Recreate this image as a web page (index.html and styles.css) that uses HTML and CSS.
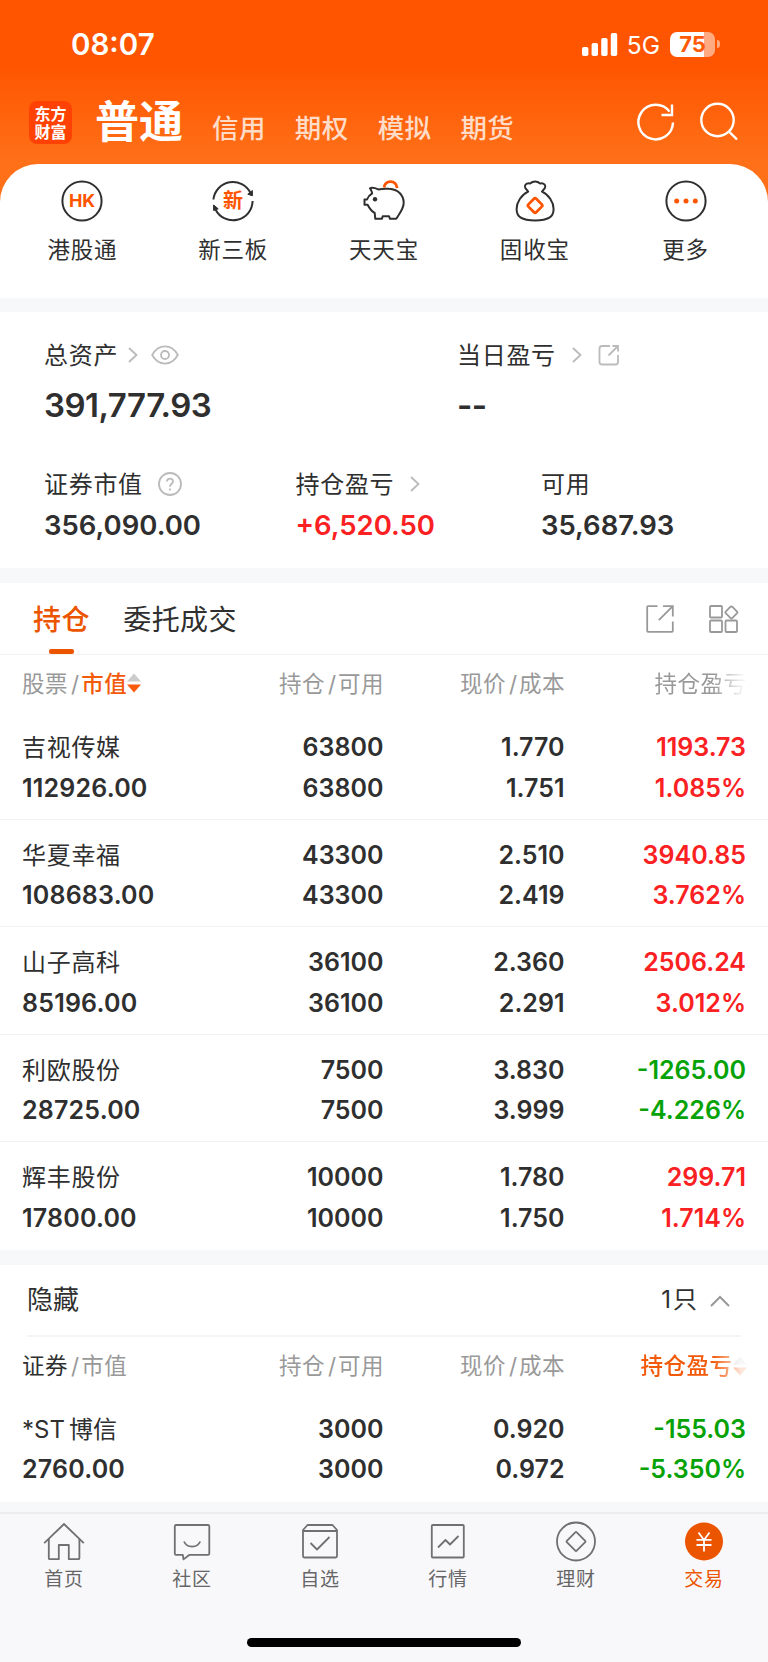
FILE: index.html
```html
<!DOCTYPE html>
<html lang="zh-CN">
<head>
  <meta charset="UTF-8" />
  <meta name="viewport" content="width=device-width, initial-scale=1" />
  <title>东方财富 - 交易</title>
  <link rel="stylesheet" href="styles.css">
</head>
<body>
  <header class="header">
    <div class="status-bar">
      <span class="time">08:07</span>
      <div class="status-right">
        <svg class="signal" width="36" height="23" viewBox="0 0 36 23" fill="#fff">
          <rect x="0" y="14" width="6.4" height="9" rx="1.8"/>
          <rect x="9.6" y="10" width="6.4" height="13" rx="1.8"/>
          <rect x="19.2" y="5" width="6.4" height="18" rx="1.8"/>
          <rect x="28.8" y="0" width="6.4" height="23" rx="1.8"/>
        </svg>
        <span class="network">5G</span>
        <span class="battery">75</span>
        <span class="battery-cap"></span>
      </div>
    </div>

    <div class="nav-bar">
      <div class="logo"><span>东方</span><span>财富</span></div>
      <nav class="accounts">
        <span class="account active">普通</span>
        <span class="account">信用</span>
        <span class="account">期权</span>
        <span class="account">模拟</span>
        <span class="account">期货</span>
      </nav>
      <div class="nav-actions">
        <svg width="40" height="40" viewBox="0 0 40 40" fill="none" stroke="#fff" stroke-width="2.4">
          <path d="M37 20.5A17.3 17.3 0 1 1 33.5 9.6"/>
          <path d="M36 2.5V13H25.5"/>
        </svg>
        <svg width="40" height="40" viewBox="0 0 40 40" fill="none" stroke="#fff" stroke-width="2.4">
          <circle cx="18.5" cy="18" r="16.2"/>
          <path d="M29.8 29.3L38 37.5"/>
        </svg>
      </div>
    </div>
  </header>

  <section class="services">
    <div class="service">
      <svg width="48" height="48" viewBox="0 0 48 48" fill="none" stroke="#2f2f2f" stroke-width="2">
        <circle cx="24" cy="24" r="19.6"/>
        <text class="icon-hk" x="24" y="30.4" text-anchor="middle">HK</text>
      </svg>
      <span>港股通</span>
    </div>
    <div class="service">
      <svg width="48" height="48" viewBox="0 0 48 48" fill="none" stroke="#2f2f2f" stroke-width="2">
        <path d="M4.4 22.5A19.6 19.6 0 0 1 41.5 16"/>
        <path d="M43.6 24A19.6 19.6 0 0 1 6.5 32.5"/>
        <path d="M43.4 13.5V18.8L38.8 17.2Z" fill="#2f2f2f" stroke-width="1"/>
        <path d="M4.6 33.5V28L9.2 31.8Z" fill="#2f2f2f" stroke-width="1"/>
        <text class="icon-xin" x="24" y="31" text-anchor="middle">新</text>
      </svg>
      <span>新三板</span>
    </div>
    <div class="service">
      <svg width="48" height="48" viewBox="0 0 48 48" fill="none" stroke="#2f2f2f" stroke-width="2" stroke-linejoin="round">
        <path d="M24 10.4C25.6 2.8 35.6 2.6 37.2 11" stroke="#ff5500" stroke-width="2.8"/>
        <path d="M10 11.4C12.5 10 15.5 11.2 18.3 12.4C22 11.6 25 11.4 29 11.8C38 12.3 43.6 18 43.7 25.8C43.7 32 39.5 36.5 36.2 41.8H30L29 39.2H22.7L22 41.8H15.3L14.7 36C11.5 34.3 9.5 31.5 7.6 27.8H4.5V22.5H7C8 19.8 9.5 18 12.2 16.4C11.8 14.5 11.3 13 10 11.4Z"/>
        <circle cx="15" cy="22.2" r="2.2" fill="#2f2f2f" stroke="none"/>
      </svg>
      <span>天天宝</span>
    </div>
    <div class="service">
      <svg width="48" height="48" viewBox="0 0 48 48" fill="none" stroke="#2f2f2f" stroke-width="2" stroke-linejoin="round">
        <path d="M17.2 14.6L14.4 11.2C12.8 8.5 15 6 18.6 6.4C20 6.5 20.2 5.6 21.6 5C23.3 4.3 25 4.3 26.6 5C28 5.6 28.2 6.5 29.6 6.4C33.2 6 35.4 8.5 33.8 11.2L31 14.6C37.5 17.5 42.6 25 42.6 32C42.6 40 37.5 43.4 24.1 43.4C10.7 43.4 5.6 40 5.6 32C5.6 25 10.7 17.5 17.2 14.6Z"/>
        <rect x="18.6" y="23" width="11" height="11" rx="1.6" transform="rotate(45 24.1 28.5)" stroke="#ff5500" stroke-width="2.8"/>
      </svg>
      <span>固收宝</span>
    </div>
    <div class="service">
      <svg width="48" height="48" viewBox="0 0 48 48" fill="none" stroke="#2f2f2f" stroke-width="2">
        <circle cx="24" cy="24" r="19.6"/>
        <g fill="#ff5500" stroke="none">
          <circle cx="14.7" cy="24" r="2.5"/>
          <circle cx="24" cy="24" r="2.5"/>
          <circle cx="33.3" cy="24" r="2.5"/>
        </g>
      </svg>
      <span>更多</span>
    </div>
  </section>

  <section class="assets">
    <div class="asset-row total">
      <div class="asset">
        <div class="asset-label">总资产
          <svg class="arrow" width="10" height="16" viewBox="0 0 10 16"><path d="M1 1L8.5 8L1 15"/></svg>
          <svg class="eye" width="28" height="20" viewBox="0 0 28 20"><path d="M1.2 10C7.5-1.4 20.5-1.4 26.8 10C20.5 21.4 7.5 21.4 1.2 10Z"/><circle cx="14" cy="10" r="4"/></svg>
        </div>
        <div class="asset-value large">391,777.93</div>
      </div>
      <div class="asset">
        <div class="asset-label">当日盈亏
          <svg class="arrow" width="10" height="16" viewBox="0 0 10 16"><path d="M1 1L8.5 8L1 15"/></svg>
          <svg class="share" width="22" height="22" viewBox="0 0 22 22"><path d="M12 2H4Q1.5 2 1.5 4.5V18Q1.5 20.5 4 20.5H17.5Q20 20.5 20 18V11M14.5 2H20V7.5M20 2L10.5 11.5"/></svg>
        </div>
        <div class="asset-value large">--</div>
      </div>
    </div>
    <div class="asset-row detail">
      <div class="asset">
        <div class="asset-label">证券市值
          <svg class="help" width="24" height="24" viewBox="0 0 24 24"><circle cx="12" cy="12" r="11"/><path d="M9 9.5C9 5.6 15 5.6 15 9.5C15 11.8 12 11.8 12 14.8"/><path d="M12 16.5V18.5"/></svg>
        </div>
        <div class="asset-value">356,090.00</div>
      </div>
      <div class="asset">
        <div class="asset-label">持仓盈亏
          <svg class="arrow" width="10" height="16" viewBox="0 0 10 16"><path d="M1 1L8.5 8L1 15"/></svg>
        </div>
        <div class="asset-value up">+6,520.50</div>
      </div>
      <div class="asset">
        <div class="asset-label">可用</div>
        <div class="asset-value">35,687.93</div>
      </div>
    </div>
  </section>

  <section class="positions">
    <div class="tabs">
      <span class="tab active">持仓</span>
      <span class="tab">委托成交</span>
      <div class="tab-actions">
        <svg width="28" height="28" viewBox="0 0 28 28"><path d="M11.5 1.2H2Q1.2 1.2 1.2 2V26Q1.2 26.8 2 26.8H26Q26.8 26.8 26.8 26V16.5M17 1.2H26.8V11.5M26.8 1.2L12.8 15.2"/></svg>
        <svg width="30" height="28" viewBox="0 0 30 28"><rect x="1" y="1" width="12" height="11.5" rx="1"/><rect x="1" y="15.5" width="12" height="11.5" rx="1"/><rect x="16.5" y="15.5" width="11.5" height="11.5" rx="1"/><rect x="17.8" y="2.8" width="9.2" height="9.2" rx="1.5" transform="rotate(45 22.4 7.4)"/></svg>
      </div>
    </div>

    <div class="row table-head">
      <span>股票<i>/</i><b>市值</b><svg class="sort" width="14" height="20" viewBox="0 0 14 20"><path d="M0 8.5L7 0.5L14 8.5Z" fill="#ccc"/><path d="M0 11.5L7 19.5L14 11.5Z" fill="#fb5a0c"/></svg></span>
      <span>持仓<i>/</i>可用</span>
      <span>现价<i>/</i>成本</span>
      <span class="faded">持仓盈亏</span>
    </div>

    <div class="row stock">
      <div><span class="name">吉视传媒</span><span>112926.00</span></div>
      <div><span>63800</span><span>63800</span></div>
      <div><span>1.770</span><span>1.751</span></div>
      <div class="up"><span>1193.73</span><span>1.085%</span></div>
    </div>
    <div class="row stock">
      <div><span class="name">华夏幸福</span><span>108683.00</span></div>
      <div><span>43300</span><span>43300</span></div>
      <div><span>2.510</span><span>2.419</span></div>
      <div class="up"><span>3940.85</span><span>3.762%</span></div>
    </div>
    <div class="row stock">
      <div><span class="name">山子高科</span><span>85196.00</span></div>
      <div><span>36100</span><span>36100</span></div>
      <div><span>2.360</span><span>2.291</span></div>
      <div class="up"><span>2506.24</span><span>3.012%</span></div>
    </div>
    <div class="row stock">
      <div><span class="name">利欧股份</span><span>28725.00</span></div>
      <div><span>7500</span><span>7500</span></div>
      <div><span>3.830</span><span>3.999</span></div>
      <div class="down"><span>-1265.00</span><span>-4.226%</span></div>
    </div>
    <div class="row stock">
      <div><span class="name">辉丰股份</span><span>17800.00</span></div>
      <div><span>10000</span><span>10000</span></div>
      <div><span>1.780</span><span>1.750</span></div>
      <div class="up"><span>299.71</span><span>1.714%</span></div>
    </div>
  </section>

  <section class="hidden-stocks">
    <div class="hidden-title">
      <span>隐藏</span>
      <span class="count">1只</span>
      <svg width="20" height="12" viewBox="0 0 20 12"><path d="M1 11L10 2L19 11"/></svg>
    </div>
    <div class="row table-head">
      <span><em>证券</em><i>/</i>市值</span>
      <span>持仓<i>/</i>可用</span>
      <span>现价<i>/</i>成本</span>
      <span class="faded"><b>持仓盈亏</b><svg class="sort" width="14" height="20" viewBox="0 0 14 20"><path d="M0 8.5L7 0.5L14 8.5Z" fill="#ccc"/><path d="M0 11.5L7 19.5L14 11.5Z" fill="#fb5a0c"/></svg></span>
    </div>
    <div class="row stock">
      <div><span class="name">*ST<span class="thin-gap"></span>博信</span><span>2760.00</span></div>
      <div><span>3000</span><span>3000</span></div>
      <div><span>0.920</span><span>0.972</span></div>
      <div class="down"><span>-155.03</span><span>-5.350%</span></div>
    </div>
  </section>

  <footer class="tab-bar">
    <div class="tab-items">
      <div class="tab-item">
        <svg width="42" height="42" viewBox="0 0 42 42"><path d="M1.2 22.2L21 3L40.8 22.2"/><path d="M5.8 18V37.2Q5.8 38.2 6.8 38.2H15.8V24H25.8V38.2H35.4Q36.4 38.2 36.4 37.2V18"/></svg>
        <span>首页</span>
      </div>
      <div class="tab-item">
        <svg width="42" height="42" viewBox="0 0 42 42"><path d="M5 4H37Q38.3 4 38.3 5.3V32.5Q38.3 33.8 37 33.8H18.5L12.5 38.4L11.8 33.8H5Q3.8 33.8 3.8 32.5V5.3Q3.8 4 5 4Z"/><path d="M13 20.5C16 27.3 26.2 27.3 29.2 20.5"/></svg>
        <span>社区</span>
      </div>
      <div class="tab-item">
        <svg width="42" height="42" viewBox="0 0 42 42"><path d="M4 9L8.5 4H33.5L38 9V35Q38 36.5 36.5 36.5H5.5Q4 36.5 4 35V9Z"/><path d="M4 10H38M11.5 22L18 28.5L30.5 16"/></svg>
        <span>自选</span>
      </div>
      <div class="tab-item">
        <svg width="42" height="42" viewBox="0 0 42 42"><rect x="4.8" y="4" width="32" height="32.5" rx="1"/><path d="M11 26.5L18.5 19L23 23.5L31.5 15"/></svg>
        <span>行情</span>
      </div>
      <div class="tab-item">
        <svg width="42" height="42" viewBox="0 0 42 42"><circle cx="21" cy="20.5" r="19"/><rect x="14" y="13.5" width="14" height="14" rx="1" transform="rotate(45 21 20.5)"/></svg>
        <span>理财</span>
      </div>
      <div class="tab-item active">
        <svg width="42" height="42" viewBox="0 0 42 42"><circle class="coin" cx="21" cy="20.5" r="19"/><path class="yen" d="M15.5 11.5L21 19L26.5 11.5M21 19V30.5M13.5 18.8H28.5M13.5 24H28.5"/></svg>
        <span>交易</span>
      </div>
    </div>
    <div class="home-indicator"></div>
  </footer>
</body>
</html>
```
FILE: styles.css
```css
* {
  box-sizing: border-box;
}

body {
  margin: 0;
  width: 768px;
  height: 1662px;
  overflow: hidden;
  display: flex;
  flex-direction: column;
  background: #f7f8fa;
  color: #2f2f2f;
  font-family: Inter, "Noto Sans CJK SC", sans-serif;
}

svg {
  display: block;
  flex: none;
}

section {
  background: #fff;
}

/* header */
.header {
  height: 204px;
  margin-bottom: -40.5px;
  background: linear-gradient(#ff5500 0, #ff5500 66px, #ff7018 160px);
  color: #fff;
}

.status-bar {
  display: flex;
  align-items: center;
  justify-content: space-between;
  height: 88px;
  padding: 0 48.5px 0 71px;
}

.time {
  font-size: 29.5px;
  font-weight: 600;
}

.status-right {
  display: flex;
  align-items: center;
}

.network {
  margin: 1px 10px 0 9px;
  font-size: 24.5px;
  line-height: 24px;
}

.battery {
  width: 45px;
  height: 25px;
  border-radius: 7px;
  background: linear-gradient(90deg, #fff 75%, #ffaa80 75%);
  color: #ff5a08;
  font-size: 22px;
  font-weight: 700;
  line-height: 25px;
  text-align: center;
}

.battery-cap {
  width: 3px;
  height: 8px;
  margin-left: 1.5px;
  border-radius: 0 3px 3px 0;
  background: #ffaa80;
}

.nav-bar {
  display: flex;
  height: 75px;
  padding: 0 29px;
}

.logo {
  display: flex;
  flex-direction: column;
  justify-content: center;
  width: 43px;
  height: 43px;
  margin-top: 13px;
  border-radius: 8px;
  background: #ff4203;
  font-size: 16px;
  font-weight: 700;
  line-height: 18px;
  text-align: center;
}

.accounts {
  display: flex;
  align-items: baseline;
  gap: 29px;
  margin-left: 23px;
  line-height: 69px;
}

.account {
  font-size: 26.5px;
  font-weight: 500;
  letter-spacing: 0.4px;
  color: #ffdcc8;
}

.account.active {
  font-size: 44px;
  font-weight: 700;
  letter-spacing: 0;
  color: #fff;
}

.nav-actions {
  display: flex;
  gap: 23px;
  margin: 14px 0 0 auto;
}

/* shortcuts */
.services {
  display: flex;
  height: 134px;
  padding: 13px 7px 0;
  border-radius: 38px 38px 0 0;
}

.service {
  flex: 1;
  display: flex;
  flex-direction: column;
  align-items: center;
  gap: 9px;
  font-size: 22.5px;
  line-height: 32px;
  letter-spacing: 0.8px;
}

.icon-hk {
  font-size: 18px;
  font-weight: 700;
  letter-spacing: -0.3px;
  fill: #ff5500;
  stroke: none;
}

.icon-xin {
  font-size: 20px;
  font-weight: 700;
  letter-spacing: 0;
  fill: #ff5500;
  stroke: none;
}

/* assets */
.assets {
  height: 256px;
  margin-top: 14.5px;
  padding: 26px 44px 0;
}

.asset-row {
  display: grid;
}

.total {
  grid-template-columns: 413px 1fr;
  height: 129px;
}

.detail {
  grid-template-columns: 251.5px 245.5px 1fr;
}

.asset-label {
  display: flex;
  align-items: center;
  height: 31px;
  font-size: 24px;
  letter-spacing: 0.7px;
}

.asset-label svg {
  margin-top: 3px;
  fill: none;
  stroke: #bbb;
  stroke-width: 1.8;
}

.arrow {
  margin-left: 10px;
}

.asset + .asset .arrow {
  margin-left: 16px;
}

.eye {
  margin-left: 13px;
}

.share {
  margin-left: 16px;
}

.help {
  margin-left: 15.5px;
}

.asset-value {
  margin-top: 9.5px;
  font-size: 27.5px;
  font-weight: 600;
  line-height: 34px;
}

.asset-value.large {
  margin-top: 16px;
  font-size: 33px;
  line-height: 40px;
  letter-spacing: -0.5px;
}

.up {
  color: #fb2022;
}

.down {
  color: #06a206;
}

/* positions */
.positions {
  margin-top: 14.5px;
}

.tabs {
  display: flex;
  align-items: flex-start;
  height: 72px;
  padding: 0 29px 0 33px;
  border-bottom: 1px solid #f2f2f2;
  font-size: 28px;
  letter-spacing: 0.4px;
}

.tab {
  position: relative;
  height: 72px;
  margin-right: 33.5px;
  line-height: 74px;
}

.tab.active {
  color: #ec5500;
  font-weight: 500;
}

.tab.active::after {
  content: "";
  position: absolute;
  left: 16px;
  bottom: 1px;
  width: 25px;
  height: 5px;
  border-radius: 2px;
  background: #ec5500;
}

.tab-actions {
  display: flex;
  gap: 35.5px;
  margin: 22px 0 0 auto;
}

.tab-actions svg {
  fill: none;
  stroke: #999;
  stroke-width: 1.8;
}

.row {
  display: grid;
  grid-template-columns: 180px 181.5px 181px 181.5px;
  padding-left: 22px;
}

.table-head {
  height: 57.5px;
  color: #999;
  font-size: 22.5px;
  letter-spacing: 0.5px;
  line-height: 57px;
}

.table-head > span {
  display: flex;
  align-items: center;
  justify-content: flex-end;
  margin-right: -0.6px;
}

.table-head > span:first-child {
  justify-content: flex-start;
}

.table-head i {
  margin: 0 1.5px 0 3px;
  font-style: normal;
}

.table-head b {
  color: #f25a0a;
  font-weight: 500;
}

.table-head em {
  color: #2f2f2f;
  font-style: normal;
}

.faded {
  -webkit-mask-image: linear-gradient(90deg, #000 calc(100% - 34px), rgba(0, 0, 0, 0.15) calc(100% - 6px));
  mask-image: linear-gradient(90deg, #000 calc(100% - 34px), rgba(0, 0, 0, 0.15) calc(100% - 6px));
}

.stock {
  height: 107.5px;
  padding-top: 15px;
  border-bottom: 1px solid #f2f2f2;
  font-size: 25px;
  font-weight: 600;
  line-height: 40.5px;
  text-align: right;
}

.stock > div:first-child {
  text-align: left;
  letter-spacing: 0.2px;
}

.stock > div > span {
  display: block;
  height: 40.5px;
}

.stock .name {
  font-size: 24px;
  font-weight: 400;
  line-height: 42px;
  letter-spacing: 0.7px;
}

.stock:last-child {
  border-bottom: none;
}

.thin-gap {
  display: inline-block;
  width: 4px;
}

/* hidden stocks */
.hidden-stocks {
  height: 237px;
  margin-top: 15px;
}

.hidden-title {
  display: flex;
  align-items: center;
  height: 72.5px;
  margin: 0 27px;
  border-bottom: 2px solid #f5f5f5;
  font-size: 26px;
  line-height: 70px;
}

.hidden-stocks .table-head {
  height: 56.5px;
}

.count {
  margin-left: auto;
  font-size: 24px;
  letter-spacing: 2px;
}

.hidden-title svg {
  margin: 2px 11px 0 11px;
  fill: none;
  stroke: #999;
  stroke-width: 2;
}

.hidden-stocks .name {
  letter-spacing: 0;
}

/* bottom bar */
.tab-bar {
  flex: 1;
  margin-top: 10.5px;
  border-top: 2px solid #ededef;
  background: #f8f8fb;
}

.tab-items {
  display: flex;
  height: 124px;
  padding-top: 7px;
}

.tab-item {
  flex: 1;
  display: flex;
  flex-direction: column;
  align-items: center;
  gap: 1px;
  color: #666;
  font-size: 19px;
  letter-spacing: 0.8px;
  line-height: 32px;
}

.tab-item svg {
  fill: none;
  stroke: #707070;
  stroke-width: 1.8;
  stroke-linejoin: round;
}

.tab-item.active {
  color: #ec5500;
}

.tab-item .coin {
  fill: #ec5500;
  stroke: none;
}

.tab-item .yen {
  stroke: #fff;
}

.home-indicator {
  width: 274px;
  height: 9px;
  margin: 0 auto;
  border-radius: 5px;
  background: #000;
}
```
